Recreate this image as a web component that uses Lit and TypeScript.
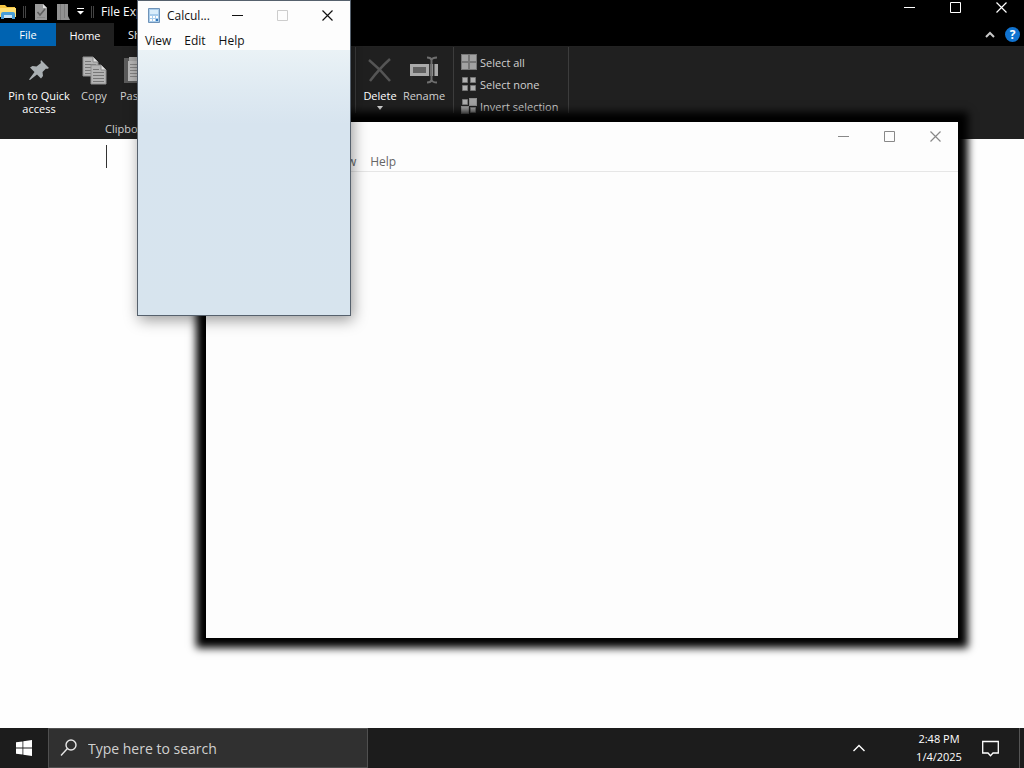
import { LitElement, html, css, svg } from "lit";
import { customElement, property } from "lit/decorators.js";

const page = (x: number, y: number) => svg`
  <path d="M${x} ${y}h10l5 5v14h-15z" fill="#b4b4b4" stroke="#8e8e8e"/>
  <path d="M${x + 10} ${y}v5h5" fill="#e0e0e0" stroke="#8a8a8a"/>
  <path d="M${x + 2} ${y + 4.5}h6M${x + 2} ${y + 7.5}h11M${x + 2} ${y + 10.5}h11M${x + 2} ${y + 13.5}h11M${x + 2} ${y + 16.5}h11" stroke="#777"/>`;

const icons = {
  folder: html`<svg width="16" height="17" viewBox="0 0 16 17"><path d="M0 2h5l2 2h8v8H0z" fill="#f5c542"/><path d="M0 5h16v9H0z" fill="#ffdf73"/><path d="M1 16V11q0-2 2-2h10q2 0 2 2v5h-3v-4H4v4z" fill="#4a9fd8"/><path d="M4 12h8v3H4z" fill="#c9e4f5"/></svg>`,
  props: html`<svg width="12" height="16" viewBox="0 0 12 16"><path d="M0 0h8l4 4v12H0z" fill="#9a9a9a"/><path d="M8 0v4h4z" fill="#dedede"/><path d="M2.500 8l2.500 3 5-6" fill="none" stroke="#5e5e5e" stroke-width="1.500"/><path d="M2 13.500h8" stroke="#888"/></svg>`,
  newFolder: html`<svg width="13" height="16" viewBox="0 0 13 16"><path d="M0 0h11v12l2 4H0z" fill="#929292"/><path d="M3.500 0v16M7.500 0v14" stroke="#7c7c7c"/></svg>`,
  more: html`<svg width="7" height="7" viewBox="0 0 7 7"><path d="M0 .500h7" stroke="#fff"/><path d="M0 3h7L3.500 6.500z" fill="#fff"/></svg>`,
  pin: html`<svg width="24" height="24" viewBox="0 0 24 24"><path d="M14 2l8 8-2 1-1-.500-3.500 3.500 .500 4-2 2.500-4-4L3 22l-1-.500L7.500 14 3 9.500l2.500-1.500 4 .500 4.500-3.500-.500-1z" fill="#aab0b3"/></svg>`,
  copy: html`<svg width="25" height="29" viewBox="0 0 25 29">${page(1, 1)}${page(9, 9)}</svg>`,
  paste: html`<svg width="20" height="28" viewBox="0 0 20 28"><path d="M0 2h20v25H0z" fill="#5c5c5c"/><path d="M4 5h16v20H4z" fill="#b9b9b9"/><path d="M5 1h10v4H5z" fill="#a5a5a5"/><path d="M6 8.500h12M6 11.500h12M6 14.500h12M6 17.500h12M6 20.500h12" stroke="#858585"/></svg>`,
  del: html`<svg width="24" height="24" viewBox="0 0 24 24"><path d="M1 2Q12 11 22 23M22 1Q12 10 2 23" fill="none" stroke="#555" stroke-width="2.500"/></svg>`,
  rename: html`<svg width="28" height="28" viewBox="0 0 28 28"><path d="M0 8h28v12H0z" fill="#a9a9a9"/><path d="M3 11h13v6H3z" fill="#606060"/><path d="M19 8h1.500v12H19zM23 8h1.500v12H23z" fill="#333"/><path d="M17 1.500q4 0 4.500 2.500 1-2.500 5.500-2.500M17 26.500q4 0 4.500-2.500 1 2.500 5.500 2.500M21.500 4v20" fill="none" stroke="#6e6e6e" stroke-width="2"/></svg>`,
  selAll: html`<svg width="16" height="16" viewBox="0 0 16 16"><path d="M0 0h16v16H0z" fill="#777"/><path d="M1 1h6v6H1zM9 1h6v6H9zM1 9h6v6H1zM9 9h6v6H9z" fill="#a2a2a2"/></svg>`,
  selNone: html`<svg width="16" height="16" viewBox="0 0 16 16"><path d="M1.500 1.500h5v5h-5zM9.500 1.500h5v5h-5zM1.500 9.500h5v5h-5zM9.500 9.500h5v5h-5z" fill="#b0b0b0" stroke="#777"/></svg>`,
  invert: html`<svg width="16" height="16" viewBox="0 0 16 16"><path d="M8 0h8v8H8zM0 8h8v8H0z" fill="#8c8c8c"/><path d="M1.500 1.500h5v5h-5zM9.500 9.500h5v5h-5z" fill="#aaa" stroke="#777"/><path d="M9 1h6v6H9zM1 9h6v6H1z" fill="#a2a2a2"/></svg>`,
  calc: html`<svg width="12" height="15" viewBox="0 0 12 15"><path d="M.500.500h11v14H.500z" fill="#a9cdec" stroke="#6f93b8"/><path d="M2 2h8v4H2z" fill="#d9edfb"/><path d="M2 8h2v2H2zM5 8h2v2H5zM8 8h2v2H8zM2 11h2v2H2zM5 11h2v2H5z" fill="#fff"/><path d="M8 11h2v2H8z" fill="#3377bb"/></svg>`,
  windows: html`<svg width="16" height="16" viewBox="0 0 16 16"><path d="M0 2.300L6.500 1.400V7.600H0zM7.300 1.300L16 0V7.600H7.300zM0 8.400H6.500V14.600L0 13.700zM7.300 8.400H16V16L7.300 14.700z" fill="#fff"/></svg>`,
  search: html`<svg width="18" height="18" viewBox="0 0 18 18"><circle cx="11" cy="6" r="5" fill="none" stroke="#e6e6e6" stroke-width="1.400"/><path d="M7.400 9.600L1 16.500" stroke="#e6e6e6" stroke-width="1.400"/></svg>`,
  up: html`<svg width="12" height="8" viewBox="0 0 12 8"><path d="M.500 7L6 1.500 11.500 7" fill="none" stroke="#fff" stroke-width="1.400"/></svg>`,
  collapse: html`<svg width="10" height="7" viewBox="0 0 10 7"><path d="M1 6l4-4 4 4" fill="none" stroke="#c8c8c8" stroke-width="2"/></svg>`,
  note: html`<svg width="17" height="17" viewBox="0 0 17 17"><path d="M.700 1.500h15.600v11.500h-5.300l-2.500 2.800L6 13H.700z" fill="none" stroke="#fff" stroke-width="1.300"/></svg>`,
};

@customElement("caption-buttons")
export class CaptionButtons extends LitElement {
  @property({ type: Boolean }) fixed = false;

  static styles = css`
    :host { display: flex; }
    button { border: 0; padding: 0; background: none; color: inherit; width: var(--slot, 46px); height: var(--bar, 28px); display: grid; place-items: center; }
    button:disabled { opacity: 0.2; }
    svg { display: block; fill: none; stroke: currentColor; }
  `;

  render() {
    return html`
      <button aria-label="Minimize"><svg width="11" height="11"><path d="M0 5.500h11"/></svg></button>
      <button aria-label="Maximize" ?disabled=${this.fixed}><svg width="11" height="11"><path d="M.500.500h10v10h-10z"/></svg></button>
      <button aria-label="Close"><svg width="11" height="11"><path d="M.500.500l10 10M10.500.500l-10 10" stroke-width="1.200"/></svg></button>`;
  }
}

@customElement("app-root")
export class AppRoot extends LitElement {
  static styles = css`
    :host { display: flex; flex-direction: column; position: relative; height: 100vh; overflow: hidden; background: #fefefe; font: 11px/13px "Open Sans", "Noto Sans", sans-serif; color: #fff; }
    * { box-sizing: border-box; }
    svg { display: block; flex: none; }
    button, input { font: inherit; color: inherit; background: none; border: 0; padding: 0; margin: 0; }
    .explorer { flex: 1; display: flex; flex-direction: column; min-height: 0; }
    .title { background: #000; height: 23px; display: flex; justify-content: space-between; overflow: hidden; }
    .quick { display: flex; align-items: center; gap: 7px; }
    .pair { display: flex; gap: 10px; padding-left: 2px; }
    .quick .bar { width: 3px; height: 12px; border: solid #444; border-width: 0 1px; }
    .name { font-size: 12px; }
    .title caption-buttons { --bar: 14px; }
    .tabs { background: #000; height: 24px; display: flex; border-bottom: 1px solid #222; }
    .tabs button { height: 23px; width: 57px; }
    .tabs .file { background: #0063b1; width: 56px; }
    .tabs .home { background: #202020; height: 24px; width: 58px; }
    .tabs .share { text-align: left; padding-left: 14px; }
    .tabs .end { margin-left: auto; display: flex; align-items: center; gap: 10px; padding-right: 4px; }
    .tabs .end button { width: auto; height: auto; }
    .tabs .end .help { width: 15px; height: 15px; border-radius: 50%; background: #1173d0; font-weight: 700; font-size: 12px; line-height: 15px; }
    .ribbon { background: #202020; height: 92px; display: flex; color: #d0d0d0; }
    .group { display: flex; flex-direction: column; justify-content: space-between; border-right: 1px solid #3c3c3c; height: 66px; }
    .group.clip { width: 355px; height: 90px; border: 0; }
    .tools { display: flex; }
    .tool { display: flex; flex-direction: column; align-items: center; }
    .tool .pic { height: 42px; display: grid; place-items: center; padding-top: 4px; }
    .bright { color: #fff; }
    .clip .tool { width: 40px; }
    .clip .tool.wide { width: 70px; }
    .clip .tools { padding-left: 4px; }
    .clip .label { padding-left: 105px; padding-bottom: 2px; }
    .organize { padding: 0 7px 0 2px; border-left: 1px solid #3c3c3c; }
    .organize .tool { width: 44px; }
    .down { border: solid transparent; border-width: 4px 3px 0; border-top-color: #ddd; margin-top: 4px; }
    .select { padding: 7px 10px 0 7px; justify-content: flex-start; gap: 6px; }
    .select button { display: flex; align-items: center; gap: 3px; height: 16px; white-space: nowrap; }
    .body { flex: 1; padding: 6px 106px; }
    .caret { width: 1px; height: 23px; background: #333; }
    .window { position: absolute; background: #fdfdfd; }
    .notepad { left: 206px; top: 122px; width: 752px; height: 516px; color: #888; box-shadow: 0 0 8px 10px #000; }
    .notepad .head { display: flex; justify-content: flex-end; }
    .menu { display: flex; }
    .notepad .menu { height: 22px; padding: 5px 0 0 124px; gap: 14px; border-bottom: 1px solid #e6e6e6; font-size: 12px; color: #666; align-items: flex-start; }
    .calc { left: 137px; top: 0; width: 214px; height: 316px; border: 1px solid #56616d; color: #111; box-shadow: 2px 4px 14px rgba(0, 0, 0, 0.4); display: flex; flex-direction: column; }
    .calc .head { display: flex; align-items: center; height: 29px; padding-left: 10px; gap: 7px; font-size: 12px; }
    .calc .head span { flex: 1; min-width: 0; white-space: nowrap; }
    .calc caption-buttons { --slot: 45px; margin-left: -7px; }
    .calc .menu { height: 20px; padding-left: 7px; gap: 13px; align-items: center; font-size: 12px; }
    .pad { flex: 1; background: linear-gradient(#eaf2f6, #dfeaf2 15%, #d7e4ef 28%, #d7e4ee); }
    .taskbar { height: 40px; background: #1c1c1c; display: flex; align-items: stretch; }
    .start { width: 48px; display: grid; place-items: center; }
    .search { width: 320px; background: #303030; border: 1px solid #505050; display: flex; align-items: center; gap: 10px; padding-left: 11px; }
    .search input { flex: 1; min-width: 0; font-size: 14px; outline: 0; }
    .search input::placeholder { color: #d0d0d0; opacity: 1; }
    .tray { margin-left: auto; display: flex; align-items: center; }
    .clock { width: 74px; margin-left: 37px; font-size: 11px; line-height: 18px; text-align: center; }
    .note { margin: 0 20px 0 6px; }
    .desk { width: 5px; height: 40px; border-left: 1px solid #555; }
  `;

  render() {
    return html`
      <main class="explorer">
        <header class="title">
          <div class="quick">${icons.folder}<i class="bar"></i><div class="pair">${icons.props}${icons.newFolder}</div>${icons.more}<i class="bar"></i><span class="name">File Exp</span></div>
          <caption-buttons></caption-buttons>
        </header>
        <nav class="tabs">
          <button class="file">File</button><button class="home">Home</button><button class="share" aria-label="Share">Sh</button>
          <div class="end"><button aria-label="Minimize the ribbon">${icons.collapse}</button><button class="help" aria-label="Help">?</button></div>
        </nav>
        <section class="ribbon">
          <div class="group clip">
            <div class="tools">
              <button class="tool wide bright"><span class="pic">${icons.pin}</span>Pin to Quick<br />access</button>
              <button class="tool"><span class="pic">${icons.copy}</span>Copy</button>
              <button class="tool"><span class="pic">${icons.paste}</span>Paste</button>
            </div>
            <div class="label">Clipboard</div>
          </div>
          <div class="group organize">
            <div class="tools">
              <button class="tool bright"><span class="pic">${icons.del}</span>Delete<i class="down"></i></button>
              <button class="tool"><span class="pic">${icons.rename}</span>Rename</button>
            </div>
          </div>
          <div class="group select">
            <button>${icons.selAll}Select all</button>
            <button>${icons.selNone}Select none</button>
            <button>${icons.invert}Invert selection</button>
          </div>
        </section>
        <div class="body"><div class="caret"></div></div>
      </main>

      <section class="window notepad">
        <div class="head"><caption-buttons></caption-buttons></div>
        <nav class="menu"><button>View</button><button>Help</button></nav>
      </section>

      <section class="window calc">
        <div class="head">${icons.calc}<span>Calcul...</span><caption-buttons fixed></caption-buttons></div>
        <nav class="menu"><button>View</button><button>Edit</button><button>Help</button></nav>
        <div class="pad"></div>
      </section>

      <footer class="taskbar">
        <button class="start" aria-label="Start">${icons.windows}</button>
        <label class="search">${icons.search}<input aria-label="Search" placeholder="Type here to search" /></label>
        <div class="tray">
          <button aria-label="Show hidden icons">${icons.up}</button>
          <div class="clock">2:48 PM<br />1/4/2025</div>
          <button class="note" aria-label="Notifications">${icons.note}</button>
          <div class="desk"></div>
        </div>
      </footer>`;
  }
}
